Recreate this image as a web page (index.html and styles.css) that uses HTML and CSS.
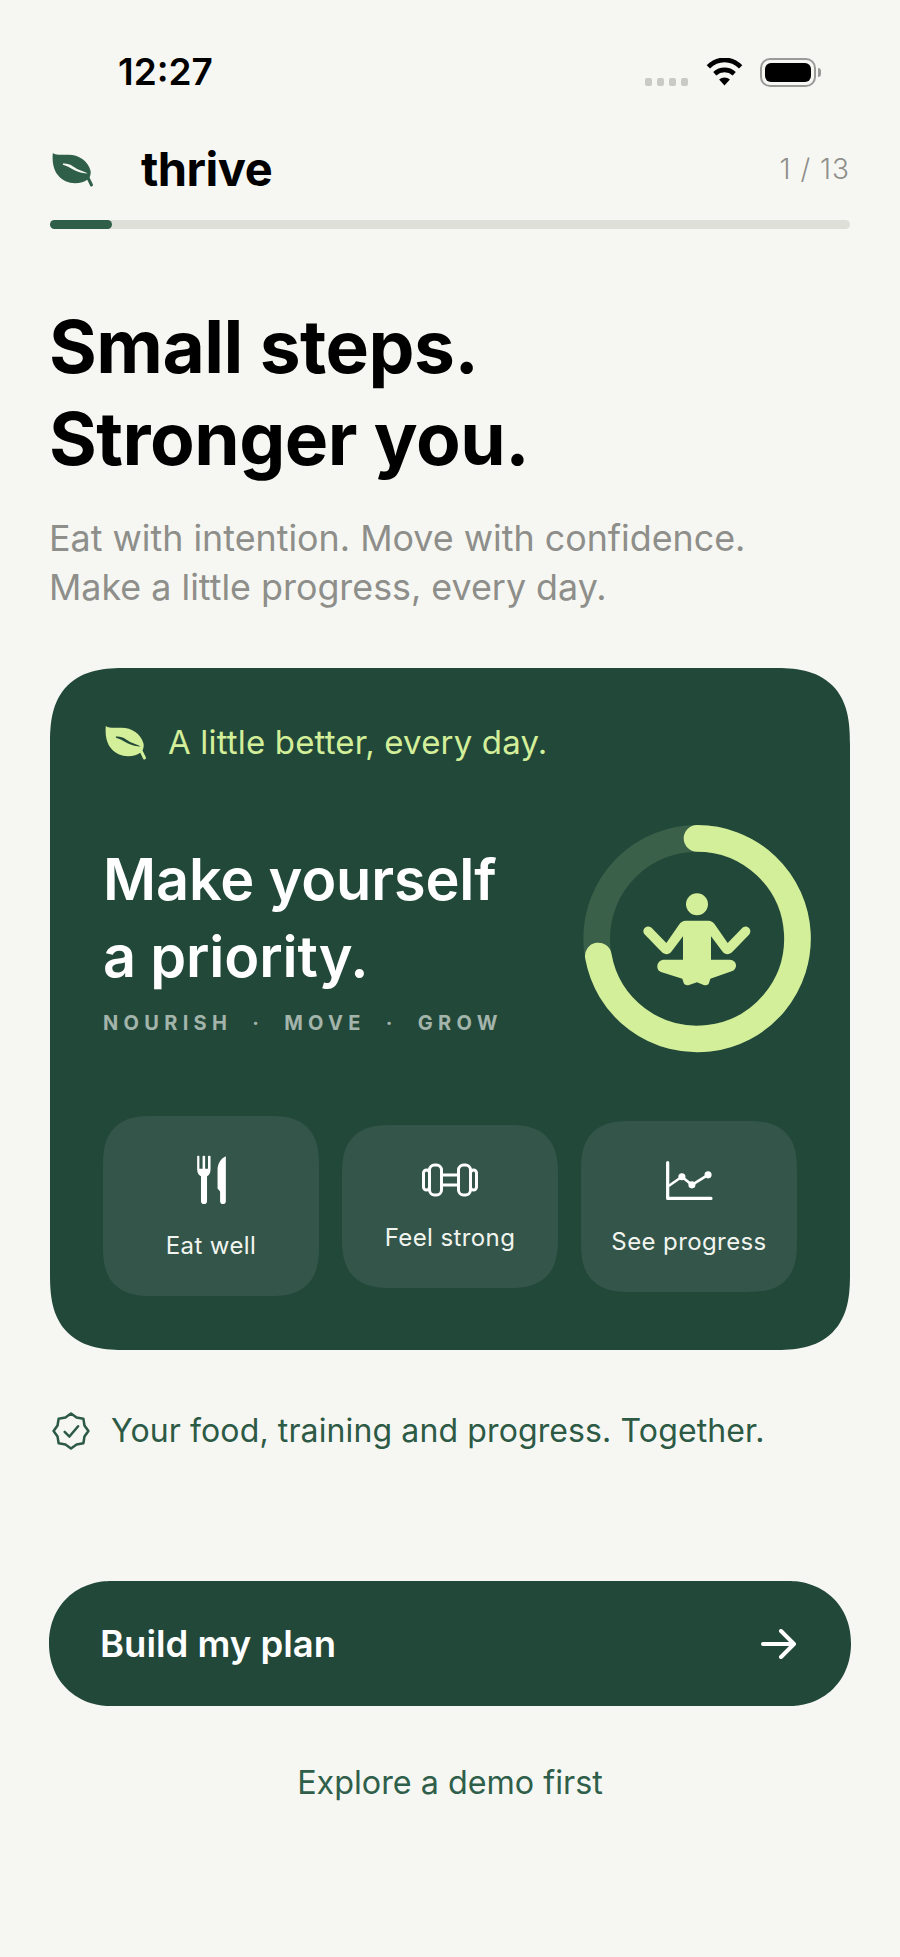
FILE: index.html
```html
<!DOCTYPE html>
<html lang="en">
<head>
<meta charset="utf-8">
<title>thrive</title>
<link rel="stylesheet" href="styles.css">
</head>
<body>
<main class="app">
  <div class="status">
    <span class="time">12:27</span>
    <div class="status-icons">
      <div class="dots"><i></i><i></i><i></i><i></i></div>
      <svg class="wifi" viewBox="0 0 110 85"><path class="wifi-arc" d="M7 26C35 -2 75 -2 103 26"/><path class="wifi-arc" d="M26 46C43 31 67 31 84 46"/><path class="wifi-dot" d="M39 63C48 55 62 55 71 63L55 81Z"/></svg>
      <div class="battery"><div class="battery-fill"></div></div>
    </div>
  </div>

  <header class="brand">
    <div class="brand-left">
      <svg class="leaf-logo" viewBox="36 30 124 110"><path class="leaf-fill" d="M38 36C46 42 60 42 82 41C114 40 142 58 150 88C152 98 149 110 142 114C128 126 98 130 76 120C48 106 34 80 38 36Z"/><path class="leaf-stem" d="M138 100L153 131"/><path class="leaf-vein" d="M68 67C90 65 100 78 112 84C122 89 132 90 142 97C130 96 116 94 104 88C90 81 80 74 68 71Z"/></svg>
      <span class="brand-name">thrive</span>
    </div>
    <span class="count">1 / 13</span>
  </header>
  <div class="progress"><div class="progress-fill"></div></div>

  <h1 class="headline">Small steps.<br>Stronger you.</h1>
  <p class="sub">Eat with intention. Move with confidence.<br>Make a little progress, every day.</p>

  <section class="card">
    <div class="tag">
      <svg class="leaf-tag" viewBox="36 30 124 110"><path class="tag-fill" d="M38 36C46 42 60 42 82 41C114 40 142 58 150 88C152 98 149 110 142 114C128 126 98 130 76 120C48 106 34 80 38 36Z"/><path class="tag-stem" d="M138 100L153 131"/><path class="tag-vein" d="M68 67C90 65 100 78 112 84C122 89 132 90 142 97C130 96 116 94 104 88C90 81 80 74 68 71Z"/></svg>
      <span>A little better, every day.</span>
    </div>
    <div class="hero">
      <div class="hero-text">
        <h2 class="title">Make yourself<br>a priority.</h2>
        <div class="eyebrow"><span>NOURISH</span><span>·</span><span>MOVE</span><span>·</span><span>GROW</span></div>
      </div>
      <svg class="ring" viewBox="128 104 684 684">
        <circle class="ring-track" cx="470" cy="445" r="301"/>
        <path class="ring-arc" d="M470 144A301 301 0 1 1 174 497"/>
        <circle class="person" cx="470" cy="342" r="33"/>
        <path class="person" d="M436 391H504C512 391 518 395 523 402L562 458L605 414C610 408 618 406 625 412C632 418 631 427 626 433L575 486C567 494 553 493 547 484L512 438V508H568C580 508 588 517 587 527C586 535 582 540 574 543L510 565L506 578C504 584 498 586 490 584L470 576L446 584C438 586 431 583 429 575L426 565L362 545C354 542 350 535 351 526C352 516 360 508 372 508H428V438L393 484C387 493 373 494 365 486L314 433C308 427 307 418 314 412C321 406 330 408 335 414L378 458L417 402C422 395 428 391 436 391Z"/>
      </svg>
    </div>
    <div class="tiles">
      <div class="tile">
        <svg class="ic-fork" viewBox="345 190 100 160"><path class="ic-fill" d="M350 198C350 195 357 195 357 198V236H367V198C367 195 375 195 375 198V236H384V198C384 195 392 195 392 198V238C392 250 388 256 381 260V338C381 350 362 350 362 338V260C355 256 350 250 350 238Z"/><path class="ic-fill" d="M440 197V338C440 350 422 350 422 338V308L414 298V240C414 220 425 203 440 197Z"/></svg>
        <span class="tile-label">Eat well</span>
      </div>
      <div class="tile">
        <svg class="ic-bell" viewBox="0 0 56 34"><rect class="ic-line" x="1.500" y="7" width="6" height="20" rx="3"/><rect class="ic-line" x="7.500" y="2" width="12" height="30" rx="5"/><path class="ic-line" d="M19.500 12H36.500M19.500 22H36.500"/><rect class="ic-line" x="36.500" y="2" width="12" height="30" rx="5"/><rect class="ic-line" x="48.500" y="7" width="6" height="20" rx="3"/></svg>
        <span class="tile-label">Feel strong</span>
      </div>
      <div class="tile">
        <svg class="ic-chart" viewBox="672 205 150 130"><path class="ic-axis" d="M681 216V327H815"/><path class="ic-axis-thin" d="M686 287L725 260L756 285L806 254"/><circle class="ic-fill" cx="725" cy="260" r="11"/><circle class="ic-fill" cx="756" cy="285" r="11"/><circle class="ic-fill" cx="806" cy="254" r="11"/></svg>
        <span class="tile-label">See progress</span>
      </div>
    </div>
  </section>

  <div class="note">
    <svg class="badge" viewBox="0 0 24 24"><path d="M12 1L15.500 3.500L19.800 4.200L20.500 8.500L23 12L20.500 15.500L19.800 19.800L15.500 20.500L12 23L8.500 20.500L4.200 19.800L3.500 15.500L1 12L3.500 8.500L4.200 4.200L8.500 3.500Z"/><path d="M8 12.500L11 15.500L16.500 9"/></svg>
    <span>Your food, training and progress. Together.</span>
  </div>

  <div class="cta">
    <span>Build my plan</span>
    <svg class="arrow" viewBox="0 0 36 30"><path d="M2 15H33M20 2L33 15L20 28"/></svg>
  </div>
  <div class="demo">Explore a demo first</div>
</main>
</body>
</html>
```
FILE: styles.css
```css
* { box-sizing: border-box; }
html, body { margin: 0; padding: 0; background: #f6f7f2; }
body { font-family: Inter, "Liberation Sans", sans-serif; color: #000; }
.app { width: 900px; height: 1957px; padding: 0 50px; overflow: hidden; }

.status { height: 96px; padding: 52px 29px 0 68px; display: flex; justify-content: space-between; align-items: flex-start; }
.time { font-size: 37px; line-height: 40px; font-weight: 600; }
.status-icons { display: flex; align-items: flex-end; margin-top: 6px; }
.dots { display: flex; gap: 5px; margin: 0 18px 1px 0; }
.dots i { width: 7px; height: 8px; border-radius: 2px; background: #c9c9c6; }
.wifi { width: 37px; height: 29px; margin-right: 17px; }
.wifi-arc { fill: none; stroke: #000; stroke-width: 14; }
.wifi-dot { fill: #000; }
.battery { width: 56px; height: 29px; border: 2px solid #9a9a98; border-radius: 10px; padding: 3px; position: relative; margin-right: 5px; }
.battery::after { content: ""; position: absolute; right: -7px; top: 8px; width: 3px; height: 9px; background: #9a9a98; border-radius: 0 3px 3px 0; }
.battery-fill { width: 100%; height: 100%; background: #000; border-radius: 6px; }

.brand { margin-top: 43px; height: 60px; display: flex; justify-content: space-between; align-items: center; }
.brand-left { display: flex; align-items: center; }
.leaf-logo { width: 42px; height: 37px; margin: 0 47px 0 2px; }
.leaf-fill { fill: #2f5f48; }
.leaf-stem { fill: none; stroke: #2f5f48; stroke-width: 9; stroke-linecap: round; }
.leaf-vein { fill: #f6f7f2; }
.brand-name { font-size: 47px; line-height: 60px; font-weight: 700; letter-spacing: -0.5px; }
.count { font-size: 28px; color: #8f8f8b; font-weight: 300; letter-spacing: 1px; }
.progress { margin-top: 21px; height: 9px; border-radius: 5px; background: #dfdfda; }
.progress-fill { width: 62px; height: 100%; border-radius: 5px; background: #2f5f48; }

.headline { margin: 72px 0 0 -1px; font-size: 73px; line-height: 92px; font-weight: 700; letter-spacing: -0.5px; }
.sub { margin: 29px 0 0 -1px; font-size: 35.850px; line-height: 49px; color: #8e8e8a; font-weight: 400; }

.card { margin-top: 56px; height: 682px; padding: 55px 53px 54px; background: #22483a; border-radius: 76px; corner-shape: superellipse(1.400); }
.tag { display: flex; align-items: center; gap: 21px; height: 38px; font-size: 33px; letter-spacing: 0.160px; color: #d3ef99; }
.leaf-tag { width: 42px; height: 37px; margin-left: 2px; }
.tag-fill { fill: #d3ef99; }
.tag-stem { fill: none; stroke: #d3ef99; stroke-width: 9; stroke-linecap: round; }
.tag-vein { fill: #22483a; }

.hero { margin: 64px -14px 0 0; display: flex; justify-content: space-between; align-items: center; }
.hero-text { margin-top: -3px; }
.title { margin: 0; font-size: 57.600px; line-height: 77px; font-weight: 600; color: #fff; letter-spacing: -0.150px; }
.eyebrow { margin-top: 16px; height: 24px; line-height: 24px; display: flex; gap: 20px; font-size: 20px; font-weight: 700; letter-spacing: 5.300px; color: #a3b4ab; }
.ring { width: 228px; height: 228px; display: block; }
.ring-track { fill: none; stroke: #3a6049; stroke-width: 80; }
.ring-arc { fill: none; stroke: #d3ef99; stroke-width: 80; stroke-linecap: round; }
.person { fill: #d3ef99; }

.tiles { margin-top: 63px; display: flex; gap: 23px; align-items: center; }
.tile { flex: 1 1 0; display: flex; flex-direction: column; align-items: center; gap: 26px; padding: 38px 0 35px; background: #34564a; border-radius: 50px; corner-shape: superellipse(1.400); }
.tile-label { font-size: 24px; line-height: 30px; color: #f2f5ef; letter-spacing: 0.4px; white-space: nowrap; }
.ic-fork { width: 33px; height: 51px; display: block; }
.ic-bell { width: 56px; height: 34px; display: block; }
.ic-chart { width: 50px; height: 42px; display: block; }
.ic-fill { fill: #fff; }
.ic-line { fill: none; stroke: #fff; stroke-width: 3; }
.ic-axis { fill: none; stroke: #fff; stroke-width: 10; stroke-linecap: round; stroke-linejoin: round; }
.ic-axis-thin { fill: none; stroke: #fff; stroke-width: 8; stroke-linecap: round; }

.note { margin-top: 61px; height: 40px; display: flex; align-items: center; gap: 21px; font-size: 32px; letter-spacing: 0.120px; color: #2d5a45; }
.note span { position: relative; top: -1px; }
.badge { width: 38px; height: 38px; margin-left: 2px; fill: none; stroke: #2d5a45; stroke-width: 1.600; stroke-linejoin: round; stroke-linecap: round; }

.cta { margin: 130px -1px 0; height: 125px; padding: 0 54px 0 51px; display: flex; justify-content: space-between; align-items: center; background: #22483a; border-radius: 62px; corner-shape: superellipse(1.060); color: #fff; font-size: 36.500px; font-weight: 600; }
.arrow { width: 36px; height: 30px; fill: none; stroke: #fff; stroke-width: 4; stroke-linecap: round; stroke-linejoin: round; }
.demo { margin-top: 57px; height: 40px; line-height: 40px; text-align: center; font-size: 32.300px; color: #2f5f4a; }
```
